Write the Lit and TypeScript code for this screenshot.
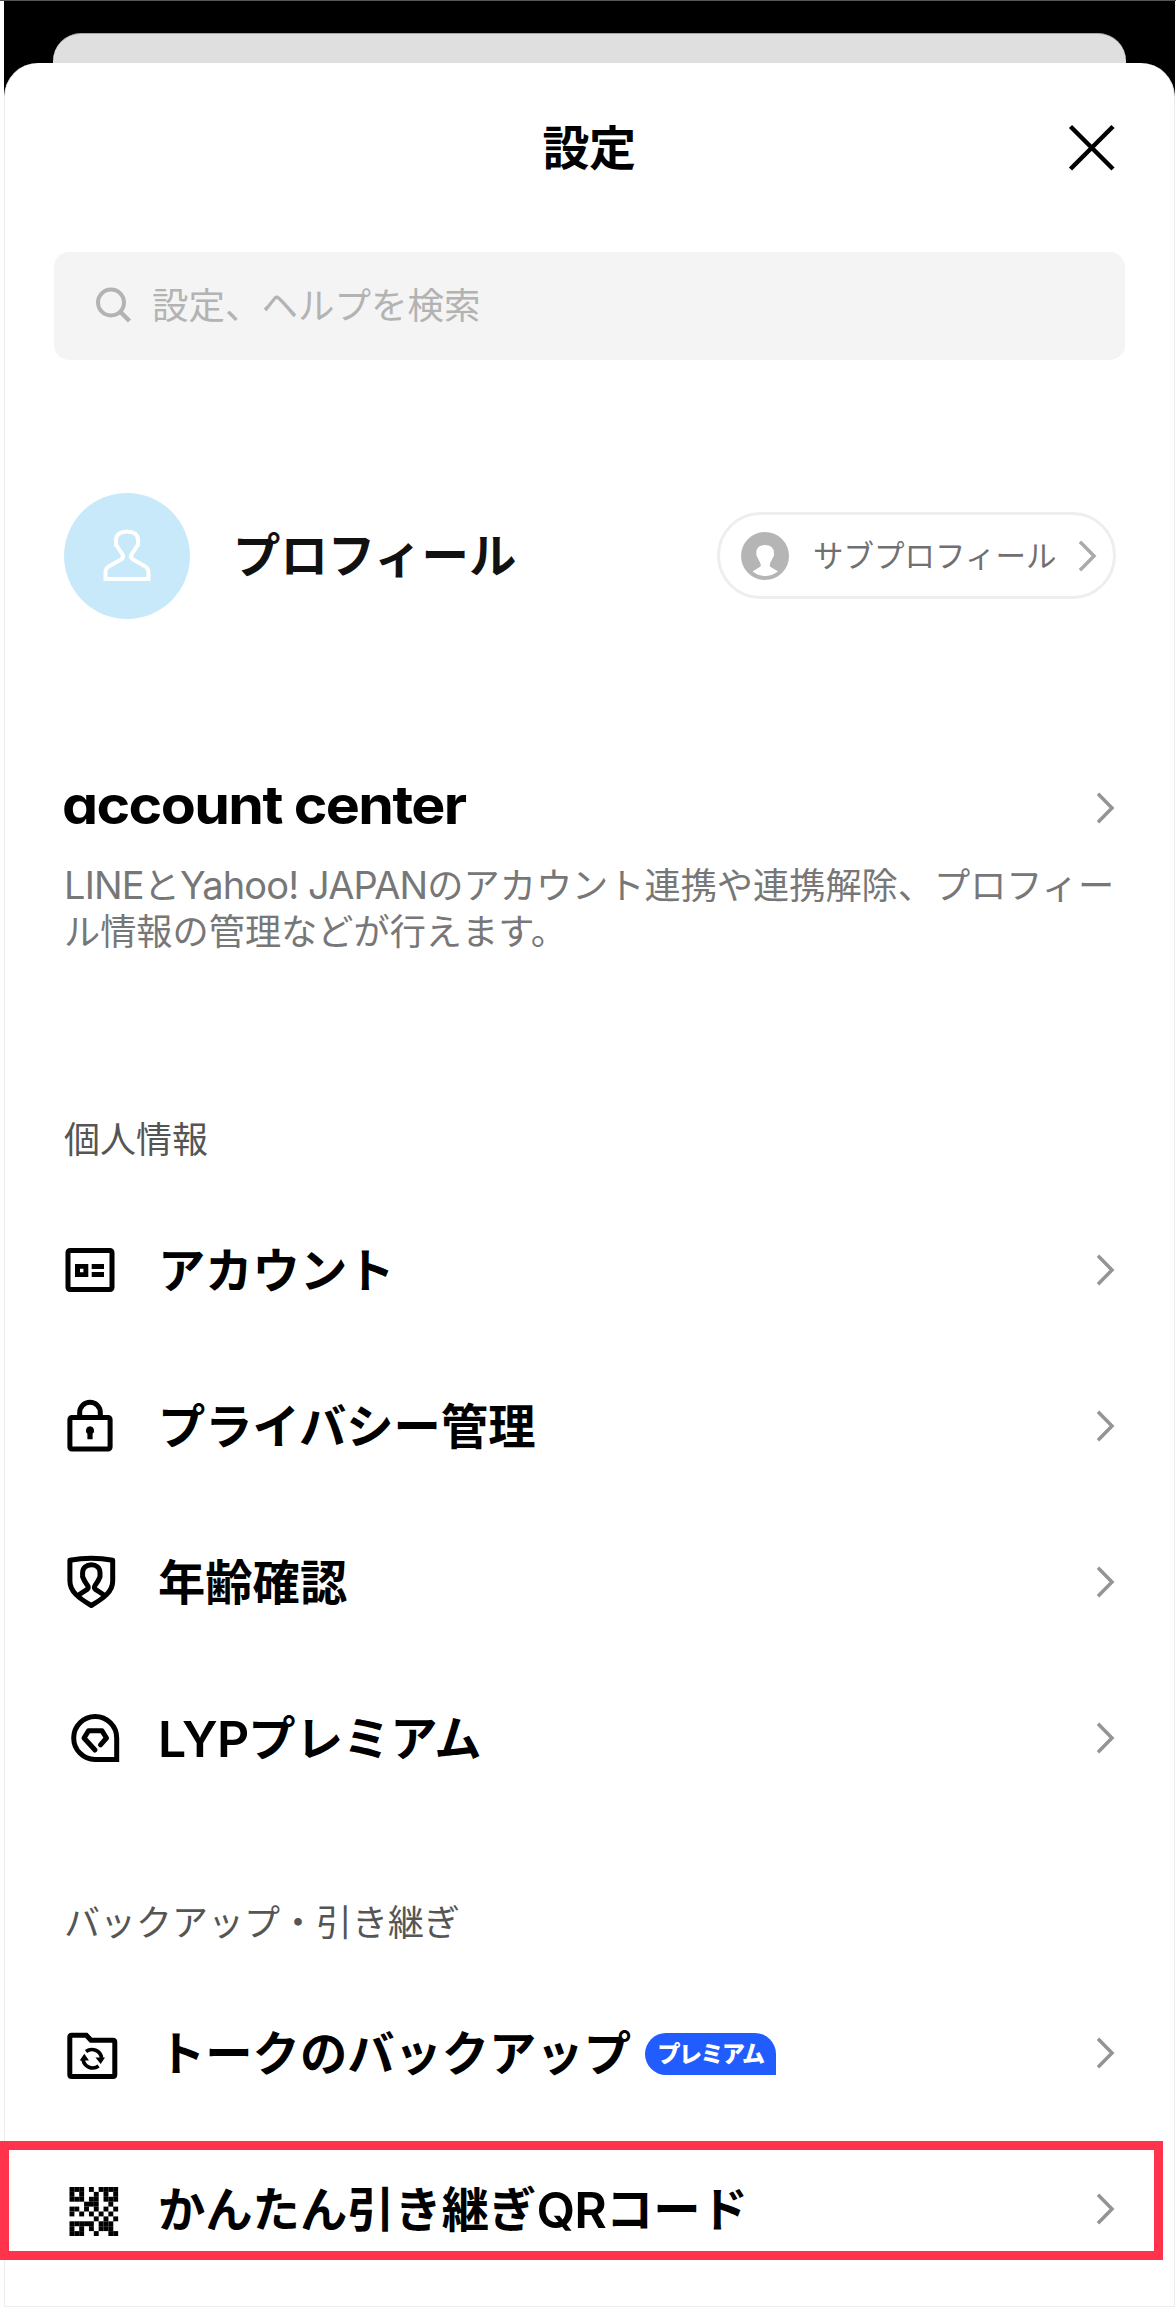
import { LitElement, html, svg, css, TemplateResult } from "lit";
import { customElement, property } from "lit/decorators.js";

const qrGrid = [
  "1110101111",
  "1010010101",
  "1110110111",
  "0001110010",
  "1101010101",
  "1010101010",
  "0000010101",
  "1111101110",
  "1010101110",
  "1110010011",
];

const icons: Record<string, TemplateResult> = {
  account: html`<svg class="icon" viewBox="0 0 60 60">
    <rect x="8" y="10.5" width="44" height="39" rx="2" fill="none" stroke="#000" stroke-width="5"/>
    <path fill="#000" fill-rule="evenodd" d="M15 24h13.3v13H15zM20 28.8v3.4h3.4v-3.4zM31.7 24H44v5H31.7zM31.7 32H44v5H31.7z"/>
  </svg>`,
  lock: html`<svg class="icon" viewBox="0 0 60 60">
    <rect x="9.9" y="21.5" width="40.2" height="31.5" rx="2" fill="none" stroke="#000" stroke-width="5"/>
    <path d="M19.7 21V16.500a10.300 10.300 0 0 1 20.600 0V21" fill="none" stroke="#000" stroke-width="5"/>
    <path fill="#000" d="M30 30.300a4.200 4.200 0 0 1 2.600 7.400V43.300h-5.200V37.700a4.200 4.200 0 0 1 2.600-7.400z"/>
  </svg>`,
  shield: html`<svg class="icon" viewBox="0 0 60 60" fill="none" stroke="#000" stroke-width="5" stroke-linejoin="round">
    <path d="M9.900 8.300Q31.300 4.300 52.700 8.300V29C52.700 39.500 44 46 31.300 53.500C18.600 46 9.900 39.500 9.900 29Z"/>
    <path d="M17 44L26.800 37.700C29.200 35.900 28.200 34 26.400 31.800C24.600 29.500 23.800 27.800 22.600 24.800V20.800C22.600 15.800 26.500 12.800 31.300 12.800S40 15.800 40 20.800V24.800C38.800 27.800 38 29.500 36.200 31.800C34.400 34 33.400 35.900 35.800 37.700L45.600 44"/>
  </svg>`,
  premium: html`<svg class="icon" viewBox="0 0 60 60" fill="none" stroke="#000" stroke-width="5">
    <path d="M56.700 57.200H35A21.500 21.500 0 1 1 56.700 35.700Z" transform="translate(0 -5.700)"/>
    <path d="M35 42L24 30L28.500 22.800H42L46.500 30L40.500 36.800" stroke-width="5" stroke-linecap="round" stroke-linejoin="round"/>
  </svg>`,
  backup: html`<svg class="icon" viewBox="0 0 60 60">
    <path d="M9.800 14.200Q9.800 12.200 11.800 12.200H26.300L31 17.300H53Q54.800 17.300 54.800 19.300V51.500Q54.800 53.500 52.800 53.500H11.800Q9.800 53.500 9.800 51.500Z" fill="none" stroke="#000" stroke-width="5"/>
    <path d="M26 28.500A9.800 9.800 0 0 1 41.600 35M38.600 43A9.800 9.800 0 0 1 23 36.500" fill="none" stroke="#000" stroke-width="3.600"/>
    <path d="M35.500 34.500h9.500l-4.300 6.500zM19.700 37.600l4.600-6.800 4.700 6.800z" fill="#000"/>
  </svg>`,
  qr: html`<svg class="icon" viewBox="0 0 60 60">
    <g transform="translate(9.500 8)">${qrGrid.map((row, y) =>
      [...row].map((cell, x) =>
        cell === "1" ? svg`<rect x=${x * 4.86} y=${y * 4.9} width="4.900" height="4.900" fill="#000"/>` : null,
      ),
    )}</g>
  </svg>`,
};

const chevron = html`<svg class="chevron" viewBox="0 0 20 32" width="20" height="32">
  <path d="M2 1.800L16 16L2 30.200" fill="none" stroke="currentColor" stroke-width="3.500"/>
</svg>`;

@customElement("settings-row")
class SettingsRow extends LitElement {
  @property() icon = "";

  static styles = css`
    :host { display: block; height: 156px; }
    .row { height: 156px; display: flex; align-items: center; }
    .icon { width: 60px; height: 60px; flex: none; margin-right: 38px; }
    .label { flex: 1; display: flex; align-items: center; line-height: 60px; padding-top: 1px; }
    .chevron { color: #949494; flex: none; }
  `;

  render() {
    return html`<div class="row">
      ${icons[this.icon]}
      <div class="label"><slot></slot></div>
      ${chevron}
    </div>`;
  }
}

@customElement("app-root")
class AppRoot extends LitElement {
  static styles = css`
    :host { display: block; font-family: Inter, "Noto Sans CJK JP", sans-serif; color: #000; }
    * { box-sizing: border-box; }
    .page { width: 1176px; height: 2308px; overflow: hidden; background: #fff; border-top: 1px solid #555; padding: 0 1px 0 4px; position: relative; }
    .backdrop { background: linear-gradient(#000 110px, #fff 110px); height: 100%; padding-top: 32px; }
    .behind { height: 30px; margin: 0 49px; background: #dfdfdf; border-top: 1px solid #aaa3a5; border-radius: 28px 28px 0 0; }
    .sheet { height: 2244px; background: #fff; border: 1px solid #ececec; border-top: 0; border-radius: 34px 34px 0 0; padding: 0 49px; }
    .header { height: 189px; padding: 0 9px 20px 0; display: grid; grid-template-columns: 60px 1fr 60px; align-items: center; }
    .title { grid-column: 2; text-align: center; font-weight: 700; font-size: 47px; letter-spacing: -.5px; margin: 0; padding-left: 8px; line-height: 60px; }
    .close { justify-self: end; }
    .search { height: 108px; border-radius: 15px; background: #f4f4f4; display: flex; align-items: center; padding-left: 40px; color: #b3b3b3; font-size: 36.500px; }
    .search svg { margin-right: 18px; }
    .search span { padding-bottom: 5px; }
    .body { padding: 0 9px 0 10px; }
    .profile { margin-top: 132px; height: 127px; display: flex; align-items: center; }
    .avatar { margin-right: 43px; }
    .name { flex: 1; font-weight: 700; font-size: 47.400px; color: #111; margin: 0; line-height: 60px; }
    .sub { height: 87px; width: 399px; border: 3px solid #eee; border-radius: 44px; display: flex; align-items: center; padding-left: 21px; font-size: 30.500px; color: #707070; }
    .sub span { flex: 1; padding: 0 0 3px 24px; white-space: nowrap; }
    .sub .chevron { color: #aaa; margin-right: 15px; }
    .center { margin-top: 158px; height: 62px; display: flex; align-items: center; justify-content: space-between; }
    .chevron { color: #949494; }
    .center h2 { margin: -7px 0 0 -2px; font-size: 53.500px; font-weight: 700; letter-spacing: -1.500px; font-feature-settings: "cv11"; transform: scaleX(1.071); transform-origin: left; }
    .desc { margin: 23px 0 0; line-height: 46px; font-size: 36.200px; color: #777; white-space: nowrap; }
    .desc .latin { font-size: 38px; letter-spacing: -.850px; }
    .heading { margin: 0; font-weight: 400; font-size: 36px; line-height: 54px; color: #555; }
    .personal { margin-top: 158px; }
    .transfer { margin-top: 80px; }
    .list { font-weight: 700; font-size: 47.300px; margin: 0 0 0 -4px; }
    .first { margin-top: 25px; }
    .badge { display: flex; justify-content: center; align-items: center; width: 131px; height: 42px; margin-left: 14px; border-radius: 21px 21px 0 21px; background: #215cff; color: #fff; font-size: 23px; font-weight: 900; letter-spacing: -1.500px; }
    .latin-bold { font-weight: 600; font-size: 50px; letter-spacing: -.800px; }
    .mark { position: absolute; left: 0; top: 2140px; width: 1163px; height: 119px; border: 9px solid #ff334b; }
  `;

  render() {
    return html`<div class="page">
      <div class="backdrop">
        <div class="behind"></div>
        <main class="sheet">
          <header class="header">
            <h1 class="title">設定</h1>
            <svg class="close" width="48" height="48" viewBox="0 0 48 48"><path d="M2.500 2.500L45 45M45 2.500L2.500 45" stroke="#000" stroke-width="4.500"/></svg>
          </header>
          <div class="search">
            <svg width="40" height="40" viewBox="0 0 40 40" fill="none" stroke="#b3b3b3"><circle cx="17" cy="16.500" r="13" stroke-width="4"/><path d="M26.500 26L35.500 35" stroke-width="4.500"/></svg>
            <span>設定、ヘルプを検索</span>
          </div>
          <div class="body">
            <section class="profile">
              <svg class="avatar" width="126" height="126" viewBox="0 0 126 126"><circle cx="63" cy="63" r="63" fill="#c8e9fa"/>
                <path d="M41.500 86V79.500C41.500 76.500 42.500 74.500 45.500 73L57 66.500C59.500 65 59.500 63.500 58.500 61.500L54.500 55.500C53.500 53.500 53 52.500 52 52V47C52 41.500 56.500 38.500 63 38.500S74 41.500 74 47V52C73 52.500 72.500 53.500 71.500 55.500L67.500 61.500C66.500 63.500 66.500 65 69 66.500L80.500 73C83.500 74.500 84.500 76.500 84.500 79.500V86Z" fill="none" stroke="#fff" stroke-width="4"/></svg>
              <h2 class="name">プロフィール</h2>
              <div class="sub">
                <svg width="48" height="48" viewBox="0 0 48 48"><circle cx="24" cy="24" r="24" fill="#b5b5b5"/><path d="M11.500 39.500L19.500 34.500Q20.500 32.500 18 28.500L15.500 23.500Q14 13 24 13T33 23.500L30.500 28.500Q28 32.500 29 34.500L37 39.500Q24 48.500 11.500 39.500Z" fill="#fff"/></svg>
                <span>サブプロフィール</span>${chevron}
              </div>
            </section>
            <section class="center"><h2>account center</h2>${chevron}</section>
            <p class="desc"><span class="latin">LINE</span>と<span class="latin">Yahoo! JAPAN</span>のアカウント連携や連携解除、プロフィー<br>ル情報の管理などが行えます。</p>
            <h3 class="heading personal">個人情報</h3>
            <div class="list first">
              <settings-row icon="account">アカウント</settings-row>
              <settings-row icon="lock">プライバシー管理</settings-row>
              <settings-row icon="shield">年齢確認</settings-row>
              <settings-row icon="premium"><span class="latin-bold">LYP</span>プレミアム</settings-row>
            </div>
            <h3 class="heading transfer">バックアップ・引き継ぎ</h3>
            <div class="list first">
              <settings-row icon="backup">トークのバックアップ<span class="badge">プレミアム</span></settings-row>
              <settings-row icon="qr">かんたん引き継ぎ<span class="latin-bold">QR</span>コード</settings-row>
            </div>
          </div>
        </main>
      </div>
      <div class="mark"></div>
    </div>`;
  }
}
